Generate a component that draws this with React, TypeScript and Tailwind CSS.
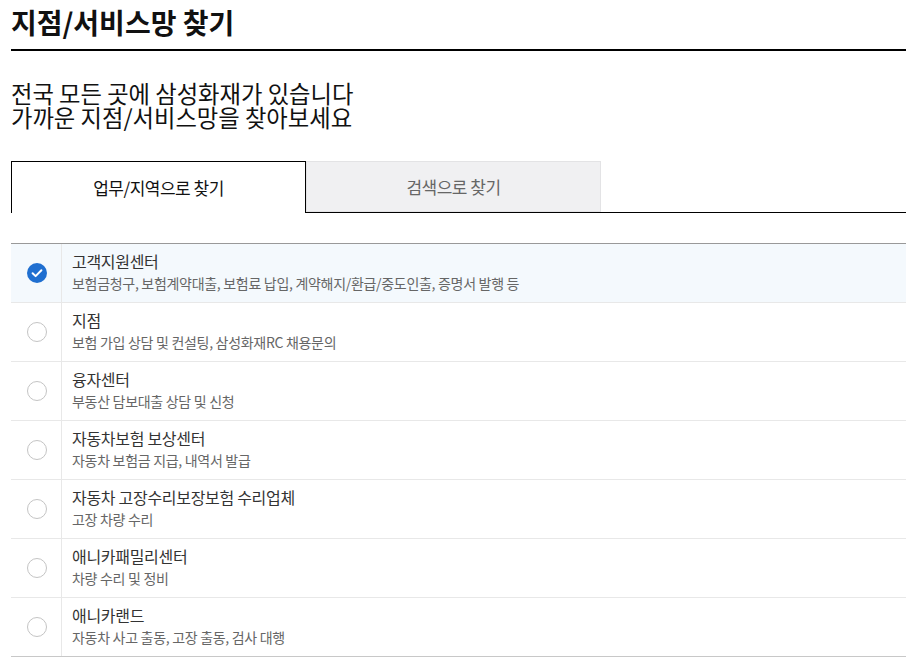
import React from 'react'

const ITEMS = [
    { title: '고객지원센터', desc: '보험금청구, 보험계약대출, 보험료 납입, 계약해지/환급/중도인출, 증명서 발행 등' },
    { title: '지점', desc: '보험 가입 상담 및 컨설팅, 삼성화재RC 채용문의' },
    { title: '융자센터', desc: '부동산 담보대출 상담 및 신청' },
    { title: '자동차보험 보상센터', desc: '자동차 보험금 지급, 내역서 발급' },
    { title: '자동차 고장수리보장보험 수리업체', desc: '고장 차량 수리' },
    { title: '애니카패밀리센터', desc: '차량 수리 및 정비' },
    { title: '애니카랜드', desc: '자동차 사고 출동, 고장 출동, 검사 대행' },
]

const CheckIcon = () => (
    <svg width="20" height="20" viewBox="0 0 20 20">
        <circle cx="10" cy="10" r="10" fill="#1f6fd0" />
        <path d="M5.6 10.2 L8.6 13.1 L14.4 7.2" fill="none" stroke="#fff" strokeWidth="2" strokeLinecap="round" strokeLinejoin="round" />
    </svg>
)

export default function App() {
    const [selected, setSelected] = React.useState(0)
    const [tab, setTab] = React.useState(0)

    return (
        <div
            className="min-h-[661px] bg-white pl-[11px] pr-[12px] text-[#111]"
            style={{ fontFamily: '"Noto Sans CJK KR", "Noto Sans", sans-serif' }}
        >
            <h1 className="pt-[2px] pb-[6px] text-[28px] font-bold leading-[41px] border-b-2 border-black">
                지점/서비스망 찾기
            </h1>

            <p className="mt-[30px] text-[23.3px] leading-[24px] text-[#111]">
                전국 모든 곳에 삼성화재가 있습니다
                <br />
                가까운 지점/서비스망을 찾아보세요
            </p>

            <div className="mt-[32px] flex h-[52px] border-b border-black">
                <button
                    onClick={() => setTab(0)}
                    className={
                        tab === 0
                            ? 'w-[295px] h-[52px] border border-b-0 border-black bg-white text-[17px] text-[#111] tracking-[-0.5px]'
                            : 'w-[295px] h-[51px] border border-[#e3e3e5] bg-[#f0f0f2] text-[17px] text-[#666] tracking-[-0.5px]'
                    }
                >
                    업무/지역으로 찾기
                </button>
                <button
                    onClick={() => setTab(1)}
                    className={
                        tab === 1
                            ? 'w-[295px] h-[52px] border border-b-0 border-black bg-white text-[17px] text-[#111] tracking-[-0.5px]'
                            : 'w-[295px] h-[51px] border border-[#e3e3e5] bg-[#f0f0f2] text-[17px] text-[#666] tracking-[-0.5px]'
                    }
                >
                    검색으로 찾기
                </button>
            </div>

            <ul className="mt-[30px] border-t border-[#999]">
                {ITEMS.map((item, i) => (
                    <li
                        key={item.title}
                        onClick={() => setSelected(i)}
                        className={
                            'flex h-[59px] cursor-pointer border-b ' +
                            (i === ITEMS.length - 1 ? 'border-[#c8c8c8] ' : 'border-[#e8e8e8] ') +
                            (selected === i ? 'bg-[#f4f9fd]' : 'bg-white')
                        }
                    >
                        <div className="flex w-[51px] shrink-0 items-center justify-center border-r border-[#e8e8e8] pl-[1px]">
                            {selected === i ? (
                                <CheckIcon />
                            ) : (
                                <span className="block h-[20px] w-[20px] rounded-full border border-[#c4c4c4] bg-white" />
                            )}
                        </div>
                        <div className="flex flex-col justify-center pl-[10px] pb-[2px]">
                            <p className="text-[16px] leading-[20px] text-[#333] tracking-[-0.3px]">{item.title}</p>
                            <p className="mt-[2px] text-[14px] leading-[20px] text-[#666] tracking-[-0.3px]">{item.desc}</p>
                        </div>
                    </li>
                ))}
            </ul>
        </div>
    )
}
